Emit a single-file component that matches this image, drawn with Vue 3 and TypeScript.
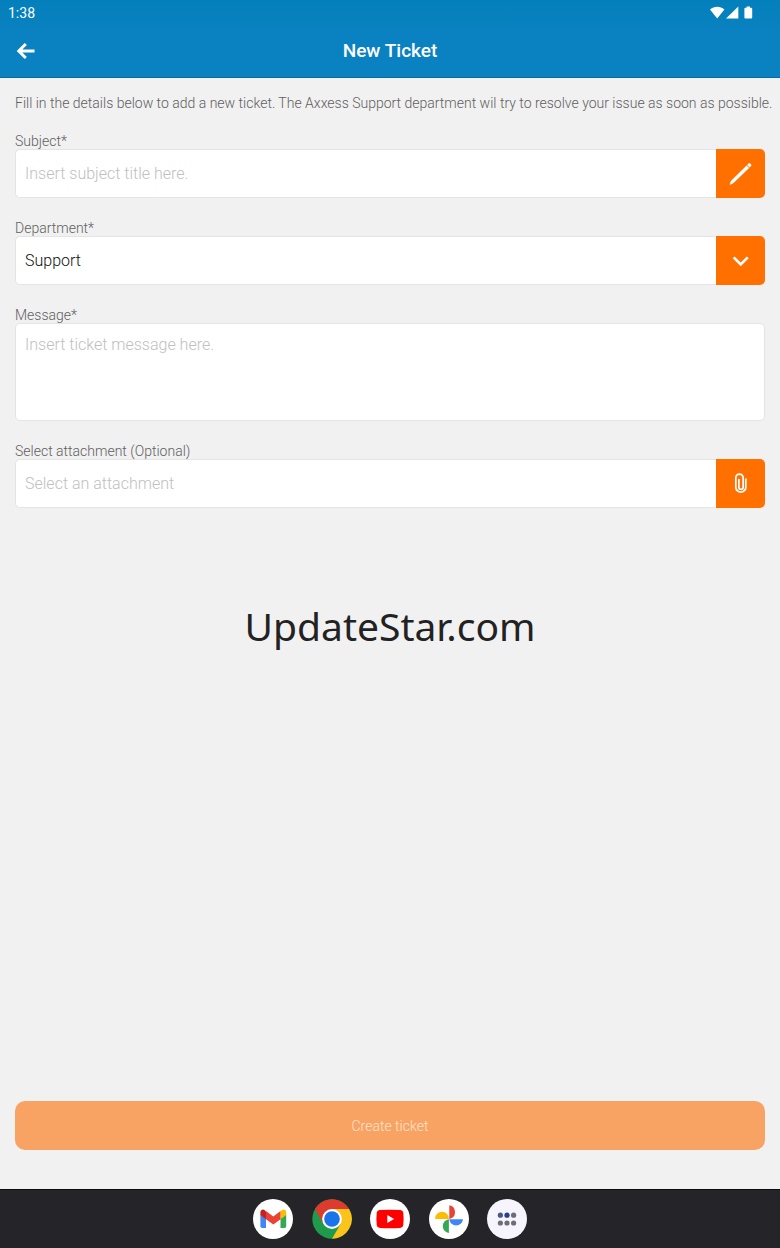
<script setup lang="ts">
import { computed, ref } from 'vue'

const subject = ref('')
const department = ref('Support')
const message = ref('')
const attachment = ref('')
const departments: string[] = ['Support', 'Accounts', 'Sales']

const subjectBox = ref<HTMLInputElement | null>(null)
const departmentBox = ref<HTMLSelectElement | null>(null)
const filePicker = ref<HTMLInputElement | null>(null)

const incomplete = computed(() => !subject.value.trim() || !message.value.trim())

function editSubject(): void {
  subjectBox.value?.focus()
}

function openDepartments(): void {
  departmentBox.value?.showPicker()
}

function pickFile(): void {
  filePicker.value?.click()
}

function onFile(event: Event): void {
  attachment.value = (event.target as HTMLInputElement).files?.[0]?.name ?? ''
}
</script>

<template>
  <div class="screen">
    <header class="top">
      <div class="status">
        <span>1:38</span>
        <svg class="status-icons" viewBox="0 0 44 14" aria-hidden="true">
          <path d="M0 3.6C4.3 -0.2 10.1 -0.2 14.4 3.6L7.2 12.6Z" />
          <path d="M28.3 0.6V12.6H16Z" />
          <path d="M36.6 0.6h3.4v1.2H41.2q1 0 1 1V11.6q0 1-1 1h-5.8q-1 0-1-1V2.8q0-1 1-1H36.6Z" />
        </svg>
      </div>
      <div class="bar">
        <button class="back" type="button" aria-label="Back">
          <svg viewBox="0 0 20 18" aria-hidden="true">
            <path d="M18.5 9H3M9.8 2 2.8 9l7 7" />
          </svg>
        </button>
        <h1>New Ticket</h1>
      </div>
    </header>

    <form class="form" @submit.prevent>
      <p class="intro">Fill in the details below to add a new ticket. The Axxess Support department wil try to resolve your issue as soon as possible.</p>

      <div class="field">
        <label for="subject">Subject*</label>
        <div class="control">
          <input id="subject" ref="subjectBox" v-model="subject" type="text" placeholder="Insert subject title here." />
          <button class="action" type="button" aria-label="Edit subject" @click="editSubject">
            <svg viewBox="0 0 48 48" aria-hidden="true">
              <path class="solid" d="M13.4 34.6 14.8 31.2 30 16.2 32.4 18.6 17.2 33.4 14 35Z" />
              <path class="solid" d="M30.5 15.7 31.9 14.3Q32.8 13.5 33.7 14.3L34.3 14.9Q35.1 15.8 34.3 16.7L32.9 18.1Z" />
            </svg>
          </button>
        </div>
      </div>

      <div class="field">
        <label for="department">Department*</label>
        <div class="control">
          <select id="department" ref="departmentBox" v-model="department">
            <option v-for="name in departments" :key="name">{{ name }}</option>
          </select>
          <button class="action" type="button" aria-label="Show departments" @click="openDepartments">
            <svg viewBox="0 0 48 48" aria-hidden="true">
              <path class="line" d="M17.3 20.9 24.2 27.8 31.1 20.9" />
            </svg>
          </button>
        </div>
      </div>

      <div class="field">
        <label for="message">Message*</label>
        <textarea id="message" v-model="message" placeholder="Insert ticket message here."></textarea>
      </div>

      <div class="field">
        <label for="attachment">Select attachment (Optional)</label>
        <div class="control">
          <input id="attachment" :value="attachment" type="text" readonly placeholder="Select an attachment" />
          <button class="action" type="button" aria-label="Choose a file" @click="pickFile">
            <svg viewBox="0 0 48 48" aria-hidden="true">
              <path class="clip" d="M29.2 19.2V27.6a4.9 4.9 0 0 1-9.8 0V18.4a3.6 3.6 0 0 1 7.2 0V27.6a2.1 2.1 0 0 1-4.2 0V19.6" />
            </svg>
          </button>
          <input ref="filePicker" type="file" hidden aria-label="Attachment file" @change="onFile" />
        </div>
      </div>

      <button class="submit" type="submit" :disabled="incomplete">Create ticket</button>
    </form>

    <nav class="dock">
      <div class="apps">
        <button type="button" aria-label="Gmail">
          <svg viewBox="0 0 40 40" aria-hidden="true">
            <circle cx="20" cy="20" r="20" fill="#fff" />
            <path fill="#4285f4" d="M7.4 15.5 13 19.4V29H9.2q-1.8 0-1.8-1.8Z" />
            <path fill="#34a853" d="M27.5 19.4 33.2 15.5V27.2q0 1.8-1.8 1.8H27.5Z" />
            <path fill="#fbbc04" d="M27.5 12.4 28.8 11.2C30.7 9.8 33.2 11 33.2 13.2V16L27.5 20.2Z" />
            <path fill="#c5221f" d="M7.4 16V13.2C7.4 11 10 9.8 11.8 11.2L13 12.4V20.2Z" />
            <path fill="#ea4335" d="M13 20.2V12.1L20.3 17.5 27.5 12.1V20.2L20.3 25.6Z" />
          </svg>
        </button>
        <button type="button" aria-label="Chrome">
          <svg viewBox="0 0 40 40" aria-hidden="true">
            <circle cx="20" cy="20" r="19.7" fill="#1e9b4c" />
            <path fill="#dc3b2d" d="M3 10.1A19.7 19.7 0 0 1 37.1 10.1H20L11.4 25Z" />
            <path fill="#fcc31a" d="M37.1 10.1A19.7 19.7 0 0 1 20 39.7L28.6 24.9 20 10.1Z" />
            <circle cx="20" cy="20" r="9.9" fill="#fff" />
            <circle cx="20" cy="20" r="7.8" fill="#1a73e8" />
          </svg>
        </button>
        <button type="button" aria-label="YouTube">
          <svg viewBox="0 0 40 40" aria-hidden="true">
            <circle cx="20" cy="20" r="20" fill="#fff" />
            <path fill="#f00" d="M10 11.1Q20 10.3 30 11.1 33 11.4 33.3 14.2 33.9 20 33.3 25.8 33 28.6 30 28.9 20 29.7 10 28.9 7 28.6 6.7 25.8 6.1 20 6.7 14.2 7 11.4 10 11.1Z" />
            <path fill="#fff" d="M17.3 16.1 24.1 20 17.3 23.9Z" />
          </svg>
        </button>
        <button type="button" aria-label="Photos">
          <svg viewBox="0 0 40 40" aria-hidden="true">
            <circle cx="20" cy="20" r="20" fill="#fff" />
            <path fill="#ea4335" d="M20.3 6.3A6.9 6.9 0 0 1 20.3 19.9Z" />
            <path fill="#4285f4" d="M34 20.2A6.9 7.2 0 0 1 20.3 20.2Z" />
            <path fill="#34a853" d="M19.9 34A6.9 6.9 0 0 1 19.9 20.3Z" />
            <path fill="#fbbc04" d="M6 19.9A6.9 7.2 0 0 1 19.9 19.9Z" />
          </svg>
        </button>
        <button type="button" aria-label="All apps">
          <svg viewBox="0 0 40 40" aria-hidden="true">
            <circle cx="20" cy="20" r="20" fill="#f6f5fd" />
            <g fill="#6d6d7a">
              <circle cx="26.6" cy="16.2" r="2.6" />
              <circle cx="13.4" cy="24" r="2.6" />
              <circle cx="20" cy="24" r="2.6" />
              <circle cx="26.6" cy="24" r="2.6" />
            </g>
            <circle cx="13.4" cy="16.2" r="2.6" fill="#4d5689" />
            <circle cx="20" cy="16.2" r="2.6" fill="#27408b" />
          </svg>
        </button>
      </div>
    </nav>

    <div class="watermark">UpdateStar.com</div>
  </div>
</template>

<style>
body {
  margin: 0;
  background: #f1f1f1;
}
</style>

<style scoped>
.screen {
  position: relative;
  display: flex;
  flex-direction: column;
  min-height: 100vh;
  background: #f1f1f1;
  color: #606060;
  font-family: Roboto, "Liberation Sans", sans-serif;
  font-size: 14px;
  font-weight: 300;
  line-height: 16px;
}

*,
*::before {
  box-sizing: border-box;
}

button,
input,
select,
textarea {
  margin: 0;
  padding: 0;
  border: 0;
  font: inherit;
}

button {
  background: none;
}

svg {
  display: block;
}

.top {
  background: linear-gradient(#0380bc, #0a81c0 40%);
  border-bottom: 1px solid #0869a6;
  color: #fff;
}

.status {
  display: flex;
  align-items: center;
  justify-content: space-between;
  height: 25px;
  padding: 0 26px 0 8px;
  font-weight: 400;
}

.status-icons {
  width: 44px;
  height: 14px;
  fill: #fff;
}

.bar {
  display: grid;
  grid-template-columns: 52px 1fr 52px;
  align-items: center;
  height: 52px;
}

.back {
  display: grid;
  place-items: center;
  height: 52px;
}

.back svg {
  width: 20px;
  height: 18px;
  fill: none;
  stroke: #fff;
  stroke-width: 3;
}

h1 {
  margin: 0;
  font-size: 19px;
  font-weight: 500;
  line-height: 24px;
  text-align: center;
}

.form {
  display: flex;
  flex: 1;
  flex-direction: column;
  gap: 22px;
  padding: 17px 15px 39px;
}

.intro {
  margin: 0 -12px 0 0;
}

.field {
  display: flex;
  flex-direction: column;
}

.control {
  display: flex;
  height: 49px;
}

.control input,
.control select,
textarea {
  flex: 1;
  min-width: 0;
  padding: 0 9px;
  border: 1px solid #e4e4e4;
  border-radius: 5px;
  background: #fff;
  color: #111;
  font-size: 16px;
  outline: none;
}

.control input,
.control select {
  border-right: 0;
  border-radius: 5px 0 0 5px;
  appearance: none;
}

textarea {
  display: block;
  flex: none;
  width: 100%;
  height: 98px;
  padding-top: 11px;
  line-height: 20px;
  resize: none;
}

input::placeholder,
textarea::placeholder {
  color: #c0c0c0;
  opacity: 1;
}

.action {
  flex: none;
  width: 49px;
  border-radius: 0 5px 5px 0;
  background: #ff7000;
}

.action svg {
  width: 49px;
  height: 49px;
}

.solid {
  fill: #fff;
}

.line {
  fill: none;
  stroke: #fff;
  stroke-width: 2.6;
}

.clip {
  fill: none;
  stroke: #fff;
  stroke-width: 1.7;
}

.submit {
  height: 49px;
  margin-top: auto;
  border-radius: 10px;
  background: #f8a364;
  color: #fee3cc;
}

.dock {
  display: flex;
  justify-content: center;
  padding: 9px 0;
  border-top: 1px solid #0c0c0e;
  background: #252529;
}

.apps {
  display: flex;
  justify-content: space-between;
  width: 274px;
}

.apps svg {
  width: 40px;
  height: 40px;
}

.watermark {
  position: absolute;
  inset: 0;
  display: grid;
  place-items: center;
  padding-top: 4px;
  color: #222;
  font-family: "Noto Sans", "Open Sans", sans-serif;
  font-size: 39px;
  font-weight: 400;
  line-height: 56px;
  pointer-events: none;
}
</style>
